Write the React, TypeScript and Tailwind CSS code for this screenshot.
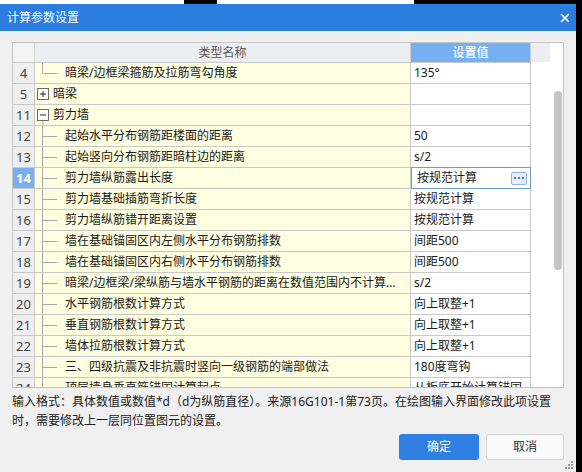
import React from "react";

type Row = {
  no: number;
  name: string;
  value: string;
  kind: "last" | "mid" | "plus" | "minus";
};

const rows: Row[] = [
  { no: 4, name: "暗梁/边框梁箍筋及拉筋弯勾角度", value: "135°", kind: "last" },
  { no: 5, name: "暗梁", value: "", kind: "plus" },
  { no: 11, name: "剪力墙", value: "", kind: "minus" },
  { no: 12, name: "起始水平分布钢筋距楼面的距离", value: "50", kind: "mid" },
  { no: 13, name: "起始竖向分布钢筋距暗柱边的距离", value: "s/2", kind: "mid" },
  { no: 14, name: "剪力墙纵筋露出长度", value: "按规范计算", kind: "mid" },
  { no: 15, name: "剪力墙基础插筋弯折长度", value: "按规范计算", kind: "mid" },
  { no: 16, name: "剪力墙纵筋错开距离设置", value: "按规范计算", kind: "mid" },
  { no: 17, name: "墙在基础锚固区内左侧水平分布钢筋排数", value: "间距500", kind: "mid" },
  { no: 18, name: "墙在基础锚固区内右侧水平分布钢筋排数", value: "间距500", kind: "mid" },
  { no: 19, name: "暗梁/边框梁/梁纵筋与墙水平钢筋的距离在数值范围内不计算...", value: "s/2", kind: "mid" },
  { no: 20, name: "水平钢筋根数计算方式", value: "向上取整+1", kind: "mid" },
  { no: 21, name: "垂直钢筋根数计算方式", value: "向上取整+1", kind: "mid" },
  { no: 22, name: "墙体拉筋根数计算方式", value: "向上取整+1", kind: "mid" },
  { no: 23, name: "三、四级抗震及非抗震时竖向一级钢筋的端部做法", value: "180度弯钩", kind: "mid" },
  { no: 24, name: "顶层墙身垂直筋锚固计算起点", value: "从板底开始计算锚固", kind: "mid" },
];

const SELECTED = 14;

function TreeMark({ kind }: { kind: Row["kind"] }) {
  if (kind === "plus" || kind === "minus") {
    return (
      <svg width="18" height="20" className="shrink-0">
        <rect x="2.5" y="4.5" width="11" height="11" fill="#fff" stroke="#6b6b6b" />
        <line x1="5" y1="10" x2="11" y2="10" stroke="#222" />
        {kind === "plus" && <line x1="8" y1="7" x2="8" y2="13" stroke="#222" />}
        {kind === "minus" && <line x1="8" y1="16" x2="8" y2="21" stroke="#a8a8a8" />}
      </svg>
    );
  }
  return (
    <svg width="30" height="20" className="shrink-0">
      <line x1="7.5" y1="-1" x2="7.5" y2={kind === "last" ? 10 : 21} stroke="#a8a8a8" />
      <line x1="7.5" y1="10.5" x2="22" y2="10.5" stroke="#a8a8a8" />
    </svg>
  );
}

export default function App() {
  return (
    <div className="w-[582px] h-[472px] bg-black overflow-hidden font-['Noto_Sans','Noto_Sans_CJK_SC',sans-serif]">
      {/* window behind */}
      <div className="flex h-[4px]">
        <div className="w-[184px] bg-white" />
        <div className="w-[33px] bg-black" />
        <div className="w-[197px] bg-white" />
      </div>

      <div className="relative w-[576px] h-[468px] bg-[#f0f0f0] flex flex-col">
        {/* Title bar */}
        <div className="h-[27px] bg-[#2b7de0] flex items-center justify-between pl-[7px] pr-[6px] text-white text-[12px] leading-none shrink-0">
          <span>计算参数设置</span>
          <svg width="10" height="10" viewBox="0 0 10 10">
            <path d="M1 1 L9 9 M9 1 L1 9" stroke="#fff" strokeWidth="1.6" />
          </svg>
        </div>

        {/* Grid */}
        <div className="pt-[11px] pl-[12px]">
          <div className="w-[552px] h-[346px] border border-[#c4c4c4] bg-white flex">
            <div className="w-[518px] flex flex-col overflow-hidden text-[12px] text-[#1a1a1a]">
              <div className="flex h-[20px] shrink-0 border-b border-[#c8c8c8] leading-[19px]">
                <div className="w-[22px] bg-[#f3f3f3] border-r border-[#d8d8d8]" />
                <div className="w-[376px] bg-[#eceef1] border-r border-[#d0d0d0] text-center text-[#555]">类型名称</div>
                <div className="w-[120px] bg-[#74b0f2] border-r border-[#c8c8c8] text-center text-white font-medium">设置值</div>
              </div>
              {rows.map((r) => {
                const sel = r.no === SELECTED;
                return (
                  <div key={r.no} className="flex h-[21px] shrink-0 border-b border-[#c8c8c8] leading-[20px]">
                    <div
                      className={`w-[22px] shrink-0 border-r border-[#c8c8c8] text-center text-[13px] ${
                        sel ? "bg-[#78b0ef] text-white font-bold" : "bg-[#f0f0f0] text-[#444]"
                      }`}
                    >
                      {r.no}
                    </div>
                    <div className="w-[376px] shrink-0 border-r border-[#c8c8c8] bg-[#fefee0] flex items-center overflow-hidden whitespace-nowrap">
                      <TreeMark kind={r.kind} />
                      <span>{r.name}</span>
                    </div>
                    {sel ? (
                      <div className="w-[120px] shrink-0 border border-[#6a9fdc] -mt-px bg-white flex items-center justify-between pl-[5px] pr-[3px] h-[22px]">
                        <span>{r.value}</span>
                        <span className="w-[16px] h-[13px] rounded-[2px] border border-[#8db4e4] bg-[#e6f0fc] flex items-center justify-center gap-[2px]">
                          <span className="w-[2px] h-[2px] bg-[#4a7fc4]" />
                          <span className="w-[2px] h-[2px] bg-[#4a7fc4]" />
                          <span className="w-[2px] h-[2px] bg-[#4a7fc4]" />
                        </span>
                      </div>
                    ) : (
                      <div className="w-[120px] shrink-0 border-r border-[#c8c8c8] bg-white pl-[3px] whitespace-nowrap overflow-hidden">
                        {r.value}
                      </div>
                    )}
                  </div>
                );
              })}
            </div>
            <div className="w-[19px]">
              <div className="h-[19px] bg-[#eceef1]" />
            </div>
            <div className="w-[13px] pt-[48px] pl-[4px]">
              <div className="w-[8px] h-[179px] rounded-full bg-[#c4c4c4]" />
            </div>
          </div>
        </div>

        {/* Description */}
        <div className="mt-[4px] px-[12px] text-[12px] leading-[19px] text-[#222]">
          输入格式：具体数值或数值*d（d为纵筋直径）。来源16G101-1第73页。在绘图输入界面修改此项设置时，需要修改上一层同位置图元的设置。
        </div>

        {/* Buttons */}
        <div className="mt-[4px] pr-[12px] flex justify-end gap-[7px] text-[12px]">
          <button className="w-[80px] h-[26px] rounded-[3px] bg-[#2f80e2] text-white">确定</button>
          <button className="w-[78px] h-[26px] rounded-[3px] bg-[#fafafa] border border-[#d2d2d2] text-[#333]">取消</button>
        </div>

        {/* resize grip */}
        <svg width="8" height="8" className="absolute right-[3px] bottom-[3px]">
          <rect x="6" y="0" width="2" height="2" fill="#9a9a9a" />
          <rect x="3" y="3" width="2" height="2" fill="#9a9a9a" />
          <rect x="6" y="3" width="2" height="2" fill="#9a9a9a" />
          <rect x="0" y="6" width="2" height="2" fill="#9a9a9a" />
          <rect x="3" y="6" width="2" height="2" fill="#9a9a9a" />
          <rect x="6" y="6" width="2" height="2" fill="#9a9a9a" />
        </svg>
      </div>
    </div>
  );
}
